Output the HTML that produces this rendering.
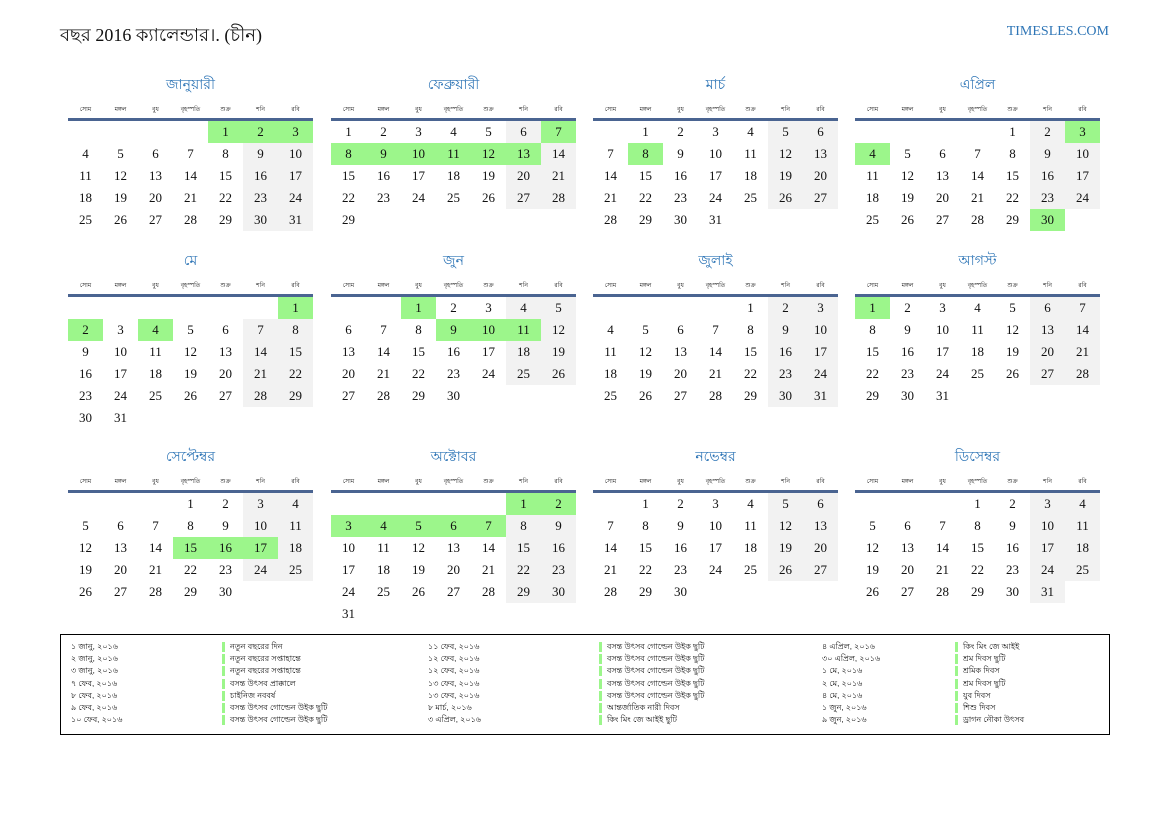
<!DOCTYPE html>
<html><head><meta charset="utf-8"><style>
*{margin:0;padding:0;box-sizing:border-box}
body{width:1169px;height:827px;background:#fff;position:relative;overflow:hidden;font-family:"Liberation Serif",serif;color:#111}
.hd{position:absolute;left:60px;top:21px;font-size:18px}
.site{position:absolute;right:60px;top:24px;font-size:14px;color:#2e75b6}
.m{position:absolute;width:245px}
.t{height:20px;line-height:20px;text-align:center;color:#2e75b6;font-size:14px;font-family:"Liberation Sans",sans-serif}
.wd{position:absolute;top:30px;left:0;width:245px;display:grid;grid-template-columns:repeat(7,35px);font-size:6px;text-align:center;line-height:12px;font-family:"Liberation Sans",sans-serif}
.ln{position:absolute;top:44px;left:0;width:245px;height:2.5px;background:#4a6491}
.d{position:absolute;top:47px;left:0;display:grid;grid-template-columns:repeat(7,35px);grid-auto-rows:22px}
.d b,.d i{font-weight:normal;font-style:normal;text-align:center;line-height:22px;font-size:13px}
.d .w{background:#f2f2f2}.d .g{background:#9cf68b}
.lg{position:absolute;left:60px;top:634px;width:1050px;height:101px;border:1px solid #000;font-size:8px;font-family:"Liberation Sans",sans-serif}
.c{position:absolute;top:6px;line-height:12.2px;white-space:nowrap}
.bar span{display:block;border-left:3px solid #9cf68b;padding-left:5px;height:10px;line-height:10px;margin-bottom:2.2px}
</style></head><body>
<div class="hd">বছর 2016 ক্যালেন্ডার।. (চীন)</div>
<div class="site">TIMESLES.COM</div>

<div class="m" style="left:68px;top:74px"><div class="t">জানুয়ারী</div><div class="wd"><span>সোম</span><span>মঙ্গল</span><span>বুধ</span><span>বৃহস্পতি</span><span>শুক্র</span><span>শনি</span><span>রবি</span></div><div class="ln"></div>
<div class="d"><i></i><i></i><i></i><i></i><b class=g>1</b><b class=g>2</b><b class=g>3</b><b>4</b><b>5</b><b>6</b><b>7</b><b>8</b><b class=w>9</b><b class=w>10</b><b>11</b><b>12</b><b>13</b><b>14</b><b>15</b><b class=w>16</b><b class=w>17</b><b>18</b><b>19</b><b>20</b><b>21</b><b>22</b><b class=w>23</b><b class=w>24</b><b>25</b><b>26</b><b>27</b><b>28</b><b>29</b><b class=w>30</b><b class=w>31</b></div></div>

<div class="m" style="left:331px;top:74px"><div class="t">ফেব্রুয়ারী</div><div class="wd"><span>সোম</span><span>মঙ্গল</span><span>বুধ</span><span>বৃহস্পতি</span><span>শুক্র</span><span>শনি</span><span>রবি</span></div><div class="ln"></div>
<div class="d"><b>1</b><b>2</b><b>3</b><b>4</b><b>5</b><b class=w>6</b><b class=g>7</b><b class=g>8</b><b class=g>9</b><b class=g>10</b><b class=g>11</b><b class=g>12</b><b class=g>13</b><b class=w>14</b><b>15</b><b>16</b><b>17</b><b>18</b><b>19</b><b class=w>20</b><b class=w>21</b><b>22</b><b>23</b><b>24</b><b>25</b><b>26</b><b class=w>27</b><b class=w>28</b><b>29</b></div></div>

<div class="m" style="left:593px;top:74px"><div class="t">মার্চ</div><div class="wd"><span>সোম</span><span>মঙ্গল</span><span>বুধ</span><span>বৃহস্পতি</span><span>শুক্র</span><span>শনি</span><span>রবি</span></div><div class="ln"></div>
<div class="d"><i></i><b>1</b><b>2</b><b>3</b><b>4</b><b class=w>5</b><b class=w>6</b><b>7</b><b class=g>8</b><b>9</b><b>10</b><b>11</b><b class=w>12</b><b class=w>13</b><b>14</b><b>15</b><b>16</b><b>17</b><b>18</b><b class=w>19</b><b class=w>20</b><b>21</b><b>22</b><b>23</b><b>24</b><b>25</b><b class=w>26</b><b class=w>27</b><b>28</b><b>29</b><b>30</b><b>31</b></div></div>

<div class="m" style="left:855px;top:74px"><div class="t">এপ্রিল</div><div class="wd"><span>সোম</span><span>মঙ্গল</span><span>বুধ</span><span>বৃহস্পতি</span><span>শুক্র</span><span>শনি</span><span>রবি</span></div><div class="ln"></div>
<div class="d"><i></i><i></i><i></i><i></i><b>1</b><b class=w>2</b><b class=g>3</b><b class=g>4</b><b>5</b><b>6</b><b>7</b><b>8</b><b class=w>9</b><b class=w>10</b><b>11</b><b>12</b><b>13</b><b>14</b><b>15</b><b class=w>16</b><b class=w>17</b><b>18</b><b>19</b><b>20</b><b>21</b><b>22</b><b class=w>23</b><b class=w>24</b><b>25</b><b>26</b><b>27</b><b>28</b><b>29</b><b class=g>30</b></div></div>

<div class="m" style="left:68px;top:250px"><div class="t">মে</div><div class="wd"><span>সোম</span><span>মঙ্গল</span><span>বুধ</span><span>বৃহস্পতি</span><span>শুক্র</span><span>শনি</span><span>রবি</span></div><div class="ln"></div>
<div class="d"><i></i><i></i><i></i><i></i><i></i><i></i><b class=g>1</b><b class=g>2</b><b>3</b><b class=g>4</b><b>5</b><b>6</b><b class=w>7</b><b class=w>8</b><b>9</b><b>10</b><b>11</b><b>12</b><b>13</b><b class=w>14</b><b class=w>15</b><b>16</b><b>17</b><b>18</b><b>19</b><b>20</b><b class=w>21</b><b class=w>22</b><b>23</b><b>24</b><b>25</b><b>26</b><b>27</b><b class=w>28</b><b class=w>29</b><b>30</b><b>31</b></div></div>

<div class="m" style="left:331px;top:250px"><div class="t">জুন</div><div class="wd"><span>সোম</span><span>মঙ্গল</span><span>বুধ</span><span>বৃহস্পতি</span><span>শুক্র</span><span>শনি</span><span>রবি</span></div><div class="ln"></div>
<div class="d"><i></i><i></i><b class=g>1</b><b>2</b><b>3</b><b class=w>4</b><b class=w>5</b><b>6</b><b>7</b><b>8</b><b class=g>9</b><b class=g>10</b><b class=g>11</b><b class=w>12</b><b>13</b><b>14</b><b>15</b><b>16</b><b>17</b><b class=w>18</b><b class=w>19</b><b>20</b><b>21</b><b>22</b><b>23</b><b>24</b><b class=w>25</b><b class=w>26</b><b>27</b><b>28</b><b>29</b><b>30</b></div></div>

<div class="m" style="left:593px;top:250px"><div class="t">জুলাই</div><div class="wd"><span>সোম</span><span>মঙ্গল</span><span>বুধ</span><span>বৃহস্পতি</span><span>শুক্র</span><span>শনি</span><span>রবি</span></div><div class="ln"></div>
<div class="d"><i></i><i></i><i></i><i></i><b>1</b><b class=w>2</b><b class=w>3</b><b>4</b><b>5</b><b>6</b><b>7</b><b>8</b><b class=w>9</b><b class=w>10</b><b>11</b><b>12</b><b>13</b><b>14</b><b>15</b><b class=w>16</b><b class=w>17</b><b>18</b><b>19</b><b>20</b><b>21</b><b>22</b><b class=w>23</b><b class=w>24</b><b>25</b><b>26</b><b>27</b><b>28</b><b>29</b><b class=w>30</b><b class=w>31</b></div></div>

<div class="m" style="left:855px;top:250px"><div class="t">আগস্ট</div><div class="wd"><span>সোম</span><span>মঙ্গল</span><span>বুধ</span><span>বৃহস্পতি</span><span>শুক্র</span><span>শনি</span><span>রবি</span></div><div class="ln"></div>
<div class="d"><b class=g>1</b><b>2</b><b>3</b><b>4</b><b>5</b><b class=w>6</b><b class=w>7</b><b>8</b><b>9</b><b>10</b><b>11</b><b>12</b><b class=w>13</b><b class=w>14</b><b>15</b><b>16</b><b>17</b><b>18</b><b>19</b><b class=w>20</b><b class=w>21</b><b>22</b><b>23</b><b>24</b><b>25</b><b>26</b><b class=w>27</b><b class=w>28</b><b>29</b><b>30</b><b>31</b></div></div>

<div class="m" style="left:68px;top:446px"><div class="t">সেপ্টেম্বর</div><div class="wd"><span>সোম</span><span>মঙ্গল</span><span>বুধ</span><span>বৃহস্পতি</span><span>শুক্র</span><span>শনি</span><span>রবি</span></div><div class="ln"></div>
<div class="d"><i></i><i></i><i></i><b>1</b><b>2</b><b class=w>3</b><b class=w>4</b><b>5</b><b>6</b><b>7</b><b>8</b><b>9</b><b class=w>10</b><b class=w>11</b><b>12</b><b>13</b><b>14</b><b class=g>15</b><b class=g>16</b><b class=g>17</b><b class=w>18</b><b>19</b><b>20</b><b>21</b><b>22</b><b>23</b><b class=w>24</b><b class=w>25</b><b>26</b><b>27</b><b>28</b><b>29</b><b>30</b></div></div>

<div class="m" style="left:331px;top:446px"><div class="t">অক্টোবর</div><div class="wd"><span>সোম</span><span>মঙ্গল</span><span>বুধ</span><span>বৃহস্পতি</span><span>শুক্র</span><span>শনি</span><span>রবি</span></div><div class="ln"></div>
<div class="d"><i></i><i></i><i></i><i></i><i></i><b class=g>1</b><b class=g>2</b><b class=g>3</b><b class=g>4</b><b class=g>5</b><b class=g>6</b><b class=g>7</b><b class=w>8</b><b class=w>9</b><b>10</b><b>11</b><b>12</b><b>13</b><b>14</b><b class=w>15</b><b class=w>16</b><b>17</b><b>18</b><b>19</b><b>20</b><b>21</b><b class=w>22</b><b class=w>23</b><b>24</b><b>25</b><b>26</b><b>27</b><b>28</b><b class=w>29</b><b class=w>30</b><b>31</b></div></div>

<div class="m" style="left:593px;top:446px"><div class="t">নভেম্বর</div><div class="wd"><span>সোম</span><span>মঙ্গল</span><span>বুধ</span><span>বৃহস্পতি</span><span>শুক্র</span><span>শনি</span><span>রবি</span></div><div class="ln"></div>
<div class="d"><i></i><b>1</b><b>2</b><b>3</b><b>4</b><b class=w>5</b><b class=w>6</b><b>7</b><b>8</b><b>9</b><b>10</b><b>11</b><b class=w>12</b><b class=w>13</b><b>14</b><b>15</b><b>16</b><b>17</b><b>18</b><b class=w>19</b><b class=w>20</b><b>21</b><b>22</b><b>23</b><b>24</b><b>25</b><b class=w>26</b><b class=w>27</b><b>28</b><b>29</b><b>30</b></div></div>

<div class="m" style="left:855px;top:446px"><div class="t">ডিসেম্বর</div><div class="wd"><span>সোম</span><span>মঙ্গল</span><span>বুধ</span><span>বৃহস্পতি</span><span>শুক্র</span><span>শনি</span><span>রবি</span></div><div class="ln"></div>
<div class="d"><i></i><i></i><i></i><b>1</b><b>2</b><b class=w>3</b><b class=w>4</b><b>5</b><b>6</b><b>7</b><b>8</b><b>9</b><b class=w>10</b><b class=w>11</b><b>12</b><b>13</b><b>14</b><b>15</b><b>16</b><b class=w>17</b><b class=w>18</b><b>19</b><b>20</b><b>21</b><b>22</b><b>23</b><b class=w>24</b><b class=w>25</b><b>26</b><b>27</b><b>28</b><b>29</b><b>30</b><b class=w>31</b></div></div>

<div class="lg">
<div class="c" style="left:10px">১ জানু, ২০১৬<br>২ জানু, ২০১৬<br>৩ জানু, ২০১৬<br>৭ ফেব, ২০১৬<br>৮ ফেব, ২০১৬<br>৯ ফেব, ২০১৬<br>১০ ফেব, ২০১৬</div>
<div class="c bar" style="left:161px;top:7px"><span>নতুন বছরের দিন</span><span>নতুন বছরের সপ্তাহান্তে</span><span>নতুন বছরের সপ্তাহান্তে</span><span>বসন্ত উৎসব প্রাক্কালে</span><span>চাইনিজ নববর্ষ</span><span>বসন্ত উৎসব গোল্ডেন উইক ছুটি</span><span>বসন্ত উৎসব গোল্ডেন উইক ছুটি</span></div>
<div class="c" style="left:367px">১১ ফেব, ২০১৬<br>১২ ফেব, ২০১৬<br>১২ ফেব, ২০১৬<br>১৩ ফেব, ২০১৬<br>১৩ ফেব, ২০১৬<br>৮ মার্চ, ২০১৬<br>৩ এপ্রিল, ২০১৬</div>
<div class="c bar" style="left:538px;top:7px"><span>বসন্ত উৎসব গোল্ডেন উইক ছুটি</span><span>বসন্ত উৎসব গোল্ডেন উইক ছুটি</span><span>বসন্ত উৎসব গোল্ডেন উইক ছুটি</span><span>বসন্ত উৎসব গোল্ডেন উইক ছুটি</span><span>বসন্ত উৎসব গোল্ডেন উইক ছুটি</span><span>আন্তর্জাতিক নারী দিবস</span><span>কিং মিং জে আইই ছুটি</span></div>
<div class="c" style="left:761px">৪ এপ্রিল, ২০১৬<br>৩০ এপ্রিল, ২০১৬<br>১ মে, ২০১৬<br>২ মে, ২০১৬<br>৪ মে, ২০১৬<br>১ জুন, ২০১৬<br>৯ জুন, ২০১৬</div>
<div class="c bar" style="left:894px;top:7px"><span>কিং মিং জে আইই</span><span>শ্রম দিবস ছুটি</span><span>শ্রমিক দিবস</span><span>শ্রম দিবস ছুটি</span><span>যুব দিবস</span><span>শিশু দিবস</span><span>ড্রাগন নৌকা উৎসব</span></div>
</div>
</body></html>
